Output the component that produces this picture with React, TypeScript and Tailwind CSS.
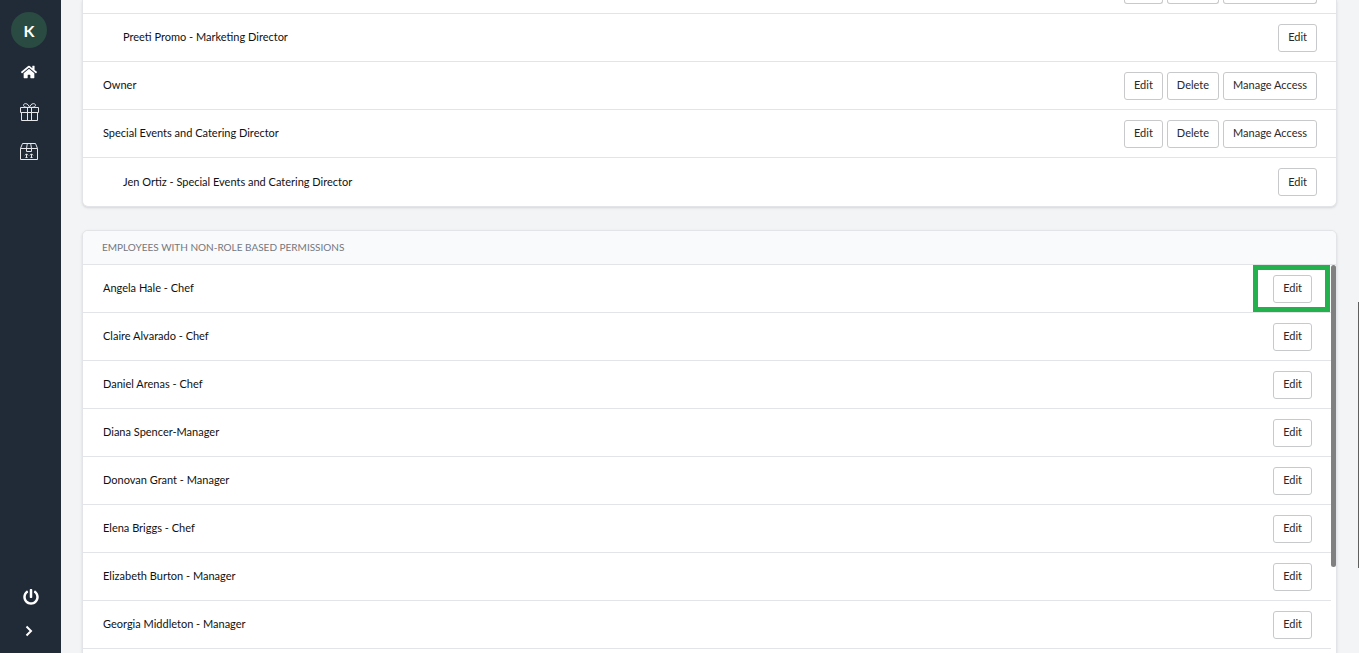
import type { ReactNode } from "react";
import { FaHome, FaPowerOff } from "react-icons/fa";

type Role = {
  name: string;
  nested?: boolean;
};

const roles: Role[] = [
  { name: "Preeti Promo - Marketing Director", nested: true },
  { name: "Owner" },
  { name: "Special Events and Catering Director" },
  { name: "Jen Ortiz - Special Events and Catering Director", nested: true },
];

const employees = [
  "Angela Hale - Chef",
  "Claire Alvarado - Chef",
  "Daniel Arenas - Chef",
  "Diana Spencer-Manager",
  "Donovan Grant - Manager",
  "Elena Briggs - Chef",
  "Elizabeth Burton - Manager",
  "Georgia Middleton - Manager",
];

function GiftIcon() {
  return (
    <svg width="19" height="18" viewBox="0 0 19 18" fill="none" stroke="currentColor" strokeWidth="1" aria-hidden="true">
      <path d="M.5 4.5h18v5H.5zM1.5 9.5v8h16v-8M7.5 4.5v13M11.5 4.5v13" />
      <path d="M9.5 4.5C8 4.5 3.5 4.5 3.5 2.4 3.5 1.2 4.4.6 5.5.6 7.5.6 9 2.5 9.5 4.5ZM9.5 4.5C11 4.5 15.5 4.5 15.5 2.4 15.5 1.2 14.6.6 13.5.6 11.5.6 10 2.5 9.5 4.5Z" />
    </svg>
  );
}

function PackageIcon() {
  return (
    <svg width="18" height="17" viewBox="0 0 18 17" fill="none" stroke="currentColor" strokeWidth="1" aria-hidden="true">
      <path d="M.5 5.5 2.5.5h13l2 5v11H.5zM.5 5.5h17M7.3.5 6.5 5.500v3h5v-3L10.700.5" />
      <path d="M6.5 15v-4M5 12.300l1.500-1.500L8 12.300M11.500 15v-4M10 12.300l1.500-1.500 1.500 1.500M5.500 14.500h2M10.500 14.500h2" />
    </svg>
  );
}

function ChevronIcon() {
  return (
    <svg width="8" height="12" viewBox="0 0 8 12" fill="none" stroke="currentColor" strokeWidth="2" aria-hidden="true">
      <path d="M1.5 1.5 6 6l-4.5 4.5" />
    </svg>
  );
}

function Sidebar() {
  return (
    <nav className="flex w-[61px] shrink-0 flex-col items-center bg-[#212a37] pt-3 pr-[3px] pb-4 text-white">
      <button type="button" className="flex size-9 items-center justify-center rounded-full bg-[#2a4b41] pt-[2px] text-base font-bold">
        K
      </button>
      <a href="#home" aria-label="Home" className="mt-4">
        <FaHome size={16} />
      </a>
      <a href="#gifts" aria-label="Gifts" className="mt-[23px] text-gray-200">
        <GiftIcon />
      </a>
      <a href="#packages" aria-label="Packages" className="mt-[22px] text-gray-200">
        <PackageIcon />
      </a>
      <button type="button" aria-label="Log out" className="mt-auto pl-[3px]">
        <FaPowerOff size={16} />
      </button>
      <button type="button" aria-label="Expand menu" className="mt-5">
        <ChevronIcon />
      </button>
    </nav>
  );
}

function ActionButton({ children }: { children: ReactNode }) {
  return (
    <button type="button" className="h-7 rounded-[3px] border border-[#c8c9cb] bg-white px-[9px] text-[#292929]">
      {children}
    </button>
  );
}

export default function App() {
  return (
    <div className="flex h-screen overflow-hidden bg-[#f3f4f6] font-['Lato','Liberation_Sans',sans-serif] text-[11px] text-[#111111]">
      <Sidebar />

      <main className="min-w-0 flex-1 px-[21px]">
        <section className="overflow-hidden rounded-b-md border border-t-0 border-[#e2e4e7] bg-white shadow-sm">
          {/* row scrolled most of the way out of view */}
          <div className="flex h-[14px] items-start justify-end gap-1 border-b border-[#e2e4e7] pr-[19px]">
            <button type="button" aria-label="Edit" className="h-1 w-[39px] rounded-b-[3px] border border-t-0 border-[#c8c9cb]" />
            <button type="button" aria-label="Delete" className="h-1 w-[52px] rounded-b-[3px] border border-t-0 border-[#c8c9cb]" />
            <button type="button" aria-label="Manage Access" className="h-1 w-[94px] rounded-b-[3px] border border-t-0 border-[#c8c9cb]" />
          </div>
          <ul>
            {roles.map((role) => (
              <li
                key={role.name}
                className={`flex h-12 items-center justify-between border-b border-[#e2e4e7] pr-[19px] last:border-b-0 ${role.nested ? "pl-10" : "pl-5"}`}
              >
                <span>{role.name}</span>
                <div className="flex gap-1">
                  <ActionButton>Edit</ActionButton>
                  {!role.nested && <ActionButton>Delete</ActionButton>}
                  {!role.nested && <ActionButton>Manage Access</ActionButton>}
                </div>
              </li>
            ))}
          </ul>
        </section>

        <section className="mt-[23px] overflow-hidden rounded-md border border-[#e2e4e7] bg-white shadow-sm">
          <h2 className="flex h-[34px] items-center border-b border-[#e2e4e7] bg-[#f9fafb] pl-[19px] text-[10px] text-[#73777d] uppercase">
            Employees with non-role based permissions
          </h2>
          <div className="flex">
            <ul className="flex-1">
              {employees.map((employee, i) => (
                <li
                  key={employee}
                  className="relative flex h-12 items-center justify-between border-b border-[#e2e4e7] pr-[19px] pl-5"
                >
                  <span>{employee}</span>
                  <ActionButton>Edit</ActionButton>
                  {i === 0 && (
                    <div className="pointer-events-none absolute inset-y-0 right-px w-[77px] border-5 border-[#22b14c]" />
                  )}
                </li>
              ))}
              <li className="h-12" />
            </ul>
            <div className="w-[5px] shrink-0">
              <div className="h-[302px] rounded-full bg-[#808080]" />
            </div>
          </div>
        </section>
      </main>

      <div className="flex w-px shrink-0 pt-[302px]">
        <div className="h-[266px] w-px bg-[#606060]" />
      </div>
    </div>
  );
}
